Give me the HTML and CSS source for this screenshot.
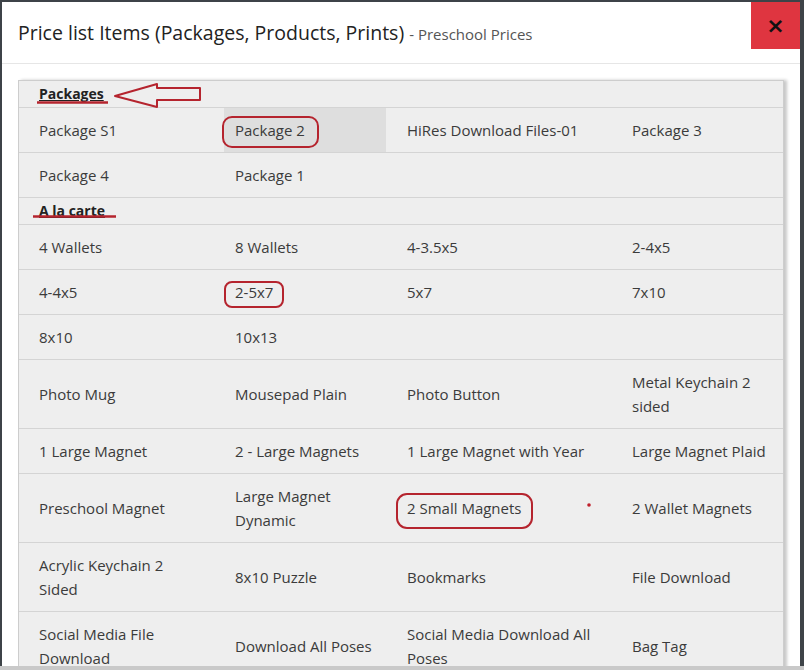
FILE: index.html
```html
<!DOCTYPE html>
<html lang="en">
<head>
  <meta charset="UTF-8">
  <meta name="viewport" content="width=device-width, initial-scale=1.0">
  <title>Price list Items</title>
  <link rel="stylesheet" href="styles.css">
</head>
<body>
  <div class="modal">
    <div class="modal-header">
      <div class="modal-title">Price list Items (Packages, Products, Prints) <span class="subtitle">- Preschool Prices</span></div>
      <button type="button" class="close">&times;</button>
    </div>
    <div class="modal-body">
      <div class="price-table">
        <div class="section"><span>Packages</span></div>
        <div class="item-row">
          <div class="cell">Package S1</div>
          <div class="cell active">Package 2</div>
          <div class="cell">HiRes Download Files-01</div>
          <div class="cell">Package 3</div>
        </div>
        <div class="item-row">
          <div class="cell">Package 4</div>
          <div class="cell">Package 1</div>
          <div class="cell"></div>
          <div class="cell"></div>
        </div>
        <div class="section"><span>A la carte</span></div>
        <div class="item-row">
          <div class="cell">4 Wallets</div>
          <div class="cell">8 Wallets</div>
          <div class="cell">4-3.5x5</div>
          <div class="cell">2-4x5</div>
        </div>
        <div class="item-row">
          <div class="cell">4-4x5</div>
          <div class="cell">2-5x7</div>
          <div class="cell">5x7</div>
          <div class="cell">7x10</div>
        </div>
        <div class="item-row">
          <div class="cell">8x10</div>
          <div class="cell">10x13</div>
          <div class="cell"></div>
          <div class="cell"></div>
        </div>
        <div class="item-row">
          <div class="cell">Photo Mug</div>
          <div class="cell">Mousepad Plain</div>
          <div class="cell">Photo Button</div>
          <div class="cell">Metal Keychain 2 sided</div>
        </div>
        <div class="item-row">
          <div class="cell">1 Large Magnet</div>
          <div class="cell">2 - Large Magnets</div>
          <div class="cell">1 Large Magnet with Year</div>
          <div class="cell">Large Magnet Plaid</div>
        </div>
        <div class="item-row">
          <div class="cell">Preschool Magnet</div>
          <div class="cell">Large Magnet Dynamic</div>
          <div class="cell">2 Small Magnets</div>
          <div class="cell">2 Wallet Magnets</div>
        </div>
        <div class="item-row">
          <div class="cell">Acrylic Keychain 2 Sided</div>
          <div class="cell">8x10 Puzzle</div>
          <div class="cell">Bookmarks</div>
          <div class="cell">File Download</div>
        </div>
        <div class="item-row">
          <div class="cell">Social Media File Download</div>
          <div class="cell">Download All Poses</div>
          <div class="cell">Social Media Download All Poses</div>
          <div class="cell">Bag Tag</div>
        </div>
      </div>
    </div>
  </div>
  <div class="scroll-strip"></div>

  <!-- red marks drawn over the screenshot -->
  <svg class="marks" width="804" height="670" viewBox="0 0 804 670">
    <g fill="none" stroke="#b5242e" stroke-width="2" stroke-linejoin="round">
      <polygon points="115,96 157,84 157,88 200,88 200,100 157,100 157,107"/>
      <line x1="37" y1="102.5" x2="108" y2="102.5" stroke-width="2.5"/>
      <line x1="33" y1="216.5" x2="116" y2="216.5" stroke-width="2.5"/>
      <rect x="223" y="117" width="95" height="30" rx="9"/>
      <rect x="225" y="282" width="58" height="25" rx="7"/>
      <rect x="397" y="494" width="135" height="34" rx="10"/>
    </g>
    <circle cx="589" cy="505" r="1.8" fill="#c0202c"/>
  </svg>
</body>
</html>
```

FILE: styles.css
```css
html {
  margin: 0;
}

body {
  width: 804px;
  height: 670px;
  margin: 0;
  overflow: hidden;
  position: relative;
  background-color: #3e4348;
  font-family: "Open Sans", "Noto Sans", sans-serif;
  color: #333;
}

.modal {
  width: 798px;
  height: 664px;
  margin: 2px 0 0 2px;
  background-color: #fff;
  overflow: hidden;
}

.modal-header {
  height: 61px;
  display: flex;
  justify-content: space-between;
  align-items: flex-start;
  border-bottom: 1px solid #e6e6e6;
}

.modal-title {
  padding: 16px 16px;
  font-size: 19.5px;
  line-height: 29px;
  color: #222;
  white-space: nowrap;
}

.subtitle {
  font-size: 15px;
  color: #555;
}

.close {
  width: 49px;
  height: 47px;
  padding: 0;
  border: none;
  background-color: #df3540;
  color: #111;
  font-family: "DejaVu Sans", sans-serif;
  font-size: 22px;
  font-weight: bold;
  line-height: 47px;
}

.modal-body {
  padding: 16px 16px 0;
}

.price-table {
  border: 1px solid #cdcdcd;
  border-bottom: none;
  background-color: #eeeeee;
  box-shadow: 3px 0 3px rgba(0, 0, 0, .22);
  font-size: 15px;
  line-height: 24px;
}

.section {
  padding: 1px 20px;
  font-size: 14px;
  font-weight: bold;
  color: #222;
}

.section span {
  text-decoration: underline;
}

.section + .item-row,
.item-row + .item-row,
.item-row + .section {
  border-top: 1px solid #d4d4d4;
}

.item-row {
  display: grid;
  grid-template-columns: 205px 162px 235px 1fr;
  align-items: stretch;
}

.cell {
  display: flex;
  align-items: center;
  padding: 10px 10px 10px 11px;
  color: #3b3b3b;
}

.cell:nth-child(odd) {
  padding-left: 20px;
  padding-right: 20px;
}

.cell:nth-child(3) {
  padding-left: 21px;
}

.cell.active {
  background-color: #dedede;
}

.scroll-strip {
  height: 4px;
  background-color: #c9c9c9;
}

.marks {
  position: absolute;
  top: 0;
  left: 0;
  pointer-events: none;
}
```
